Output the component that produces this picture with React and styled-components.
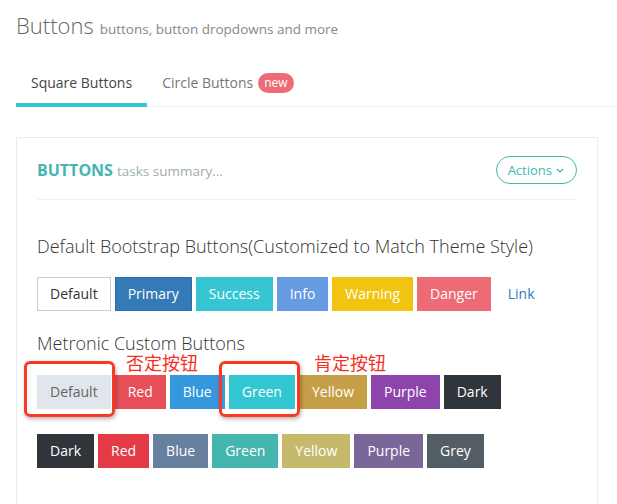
import React from "react"
import styled, { createGlobalStyle } from "styled-components"

const GlobalStyle = createGlobalStyle`
  body {
    margin: 0;
    background: #ffffff;
    font-family: "Open Sans", "Liberation Sans", sans-serif;
    color: #333;
  }
`

const Page = styled.div`
  padding-left: 16px;
  overflow: hidden;
  height: 504px;
`

const PageTitle = styled.h1`
  display: flex;
  align-items: baseline;
  gap: 6px;
  margin: 0;
  padding-top: 12px;
  font-size: 22px;
  line-height: 26px;
  font-weight: 300;
  color: #666;
`

const PageSubtitle = styled.small`
  font-size: 13.5px;
  font-weight: 400;
  color: #888;
`

const TabBar = styled.ul`
  display: flex;
  list-style: none;
  margin: 21px 0 0;
  padding: 0;
  border-bottom: 1px solid #eef1f5;
`

const Tab = styled.li`
  display: flex;
  align-items: center;
  gap: 5px;
  padding: 10px 15px;
  margin-bottom: -1px;
  font-size: 14px;
  line-height: 20px;
  color: ${p => (p.$active ? "#444" : "#777")};
  border-bottom: 4px solid ${p => (p.$active ? "#36c6d3" : "transparent")};
`

const Badge = styled.span`
  display: inline-block;
  height: 20px;
  padding: 0 6px;
  border-radius: 10px;
  background: #ed6b75;
  color: #fff;
  font-size: 12px;
  line-height: 20px;
`

const Portlet = styled.div`
  margin: 30px 19px 0 0;
  padding: 12px 20px 80px;
  border: 1px solid #e7ecf1;
`

const PortletHead = styled.div`
  display: flex;
  align-items: center;
  justify-content: space-between;
  padding: 6px 0 15px;
  border-bottom: 1px solid #eef1f5;
`

const Caption = styled.div`
  display: flex;
  align-items: baseline;
  gap: 4px;
`

const CaptionSubject = styled.span`
  font-size: 16px;
  font-weight: 700;
  color: #44b6ae;
  text-transform: uppercase;
`

const CaptionHelper = styled.span`
  font-size: 13.5px;
  color: #9eacb4;
`

const ActionsButton = styled.button`
  display: flex;
  align-items: center;
  gap: 4px;
  height: 28px;
  padding: 0 12px 0 11px;
  border: 1px solid #44b6ae;
  border-radius: 14px;
  background: #fff;
  color: #44b6ae;
  font-family: inherit;
  font-size: 13px;
`

const SectionTitle = styled.h4`
  margin: ${p => p.$top}px 0 ${p => p.$bottom}px;
  font-size: 18px;
  line-height: 20px;
  font-weight: 300;
  color: #333;
`

const ButtonRow = styled.div`
  position: relative;
  display: flex;
  gap: ${p => p.$gap}px;
  margin-top: ${p => p.$top || 0}px;
`

const Btn = styled.button`
  padding: 6px 12px;
  font-family: inherit;
  font-size: 14px;
  line-height: 20px;
  border: 1px solid ${p => p.$border || p.$bg};
  border-radius: 0;
  background: ${p => p.$bg};
  color: ${p => p.$color || "#fff"};
`

const Highlight = styled.div`
  position: absolute;
  top: -14px;
  left: ${p => p.$left}px;
  width: ${p => p.$width}px;
  height: 56px;
  box-sizing: border-box;
  border: 3px solid #f83a22;
  border-radius: 6px;
  box-shadow: 1px 2px 4px rgba(0, 0, 0, 0.3);
  pointer-events: none;
`

const Note = styled.span`
  position: absolute;
  top: -22px;
  left: ${p => p.$left}px;
  font-family: "Noto Sans CJK SC", sans-serif;
  font-size: 18px;
  line-height: 18px;
  color: #f5301f;
`

const Chevron = () => (
  <svg width="8" height="5" viewBox="0 0 8 5">
    <polyline points="1,1 4,4 7,1" fill="none" stroke="#44b6ae" strokeWidth="1.2" />
  </svg>
)

const bootstrap = [
  { label: "Default", bg: "#fff", border: "#ccc", color: "#333" },
  { label: "Primary", bg: "#337ab7", border: "#2e6da4" },
  { label: "Success", bg: "#36c6d3" },
  { label: "Info", bg: "#659be0" },
  { label: "Warning", bg: "#f1c40f" },
  { label: "Danger", bg: "#ed6b75" },
  { label: "Link", bg: "transparent", border: "transparent", color: "#337ab7" },
]

const metronic = [
  { label: "Default", bg: "#e1e5ec", color: "#666" },
  { label: "Red", bg: "#e7505a" },
  { label: "Blue", bg: "#3598dc" },
  { label: "Green", bg: "#32c5d2" },
  { label: "Yellow", bg: "#c49f47" },
  { label: "Purple", bg: "#8e44ad" },
  { label: "Dark", bg: "#2f353b" },
]

const extra = [
  { label: "Dark", bg: "#2f353b" },
  { label: "Red", bg: "#e43a45" },
  { label: "Blue", bg: "#67809f" },
  { label: "Green", bg: "#44b6ae" },
  { label: "Yellow", bg: "#c5b96b" },
  { label: "Purple", bg: "#796799" },
  { label: "Grey", bg: "#525e64" },
]

const renderButtons = list =>
  list.map((b, i) => (
    <Btn key={i} $bg={b.bg} $border={b.border} $color={b.color}>
      {b.label}
    </Btn>
  ))

export default function App() {
  return (
    <Page>
      <GlobalStyle />
      <PageTitle>
        Buttons <PageSubtitle>buttons, button dropdowns and more</PageSubtitle>
      </PageTitle>

      <TabBar>
        <Tab $active>Square Buttons</Tab>
        <Tab>
          Circle Buttons <Badge>new</Badge>
        </Tab>
      </TabBar>

      <Portlet>
        <PortletHead>
          <Caption>
            <CaptionSubject>Buttons</CaptionSubject>
            <CaptionHelper>tasks summary...</CaptionHelper>
          </Caption>
          <ActionsButton>
            Actions <Chevron />
          </ActionsButton>
        </PortletHead>

        <SectionTitle $top={36} $bottom={21}>
          Default Bootstrap Buttons(Customized to Match Theme Style)
        </SectionTitle>
        <ButtonRow $gap={4}>{renderButtons(bootstrap)}</ButtonRow>

        <SectionTitle $top={22} $bottom={22}>
          Metronic Custom Buttons
        </SectionTitle>
        <ButtonRow $gap={4}>
          {renderButtons(metronic)}
          {/* annotations drawn over the screenshot */}
          <Highlight $left={-13} $width={91} />
          <Note $left={89}>否定按钮</Note>
          <Highlight $left={182} $width={81} />
          <Note $left={277}>肯定按钮</Note>
        </ButtonRow>

        <ButtonRow $gap={4} $top={25}>
          {renderButtons(extra)}
        </ButtonRow>
      </Portlet>
    </Page>
  )
}
